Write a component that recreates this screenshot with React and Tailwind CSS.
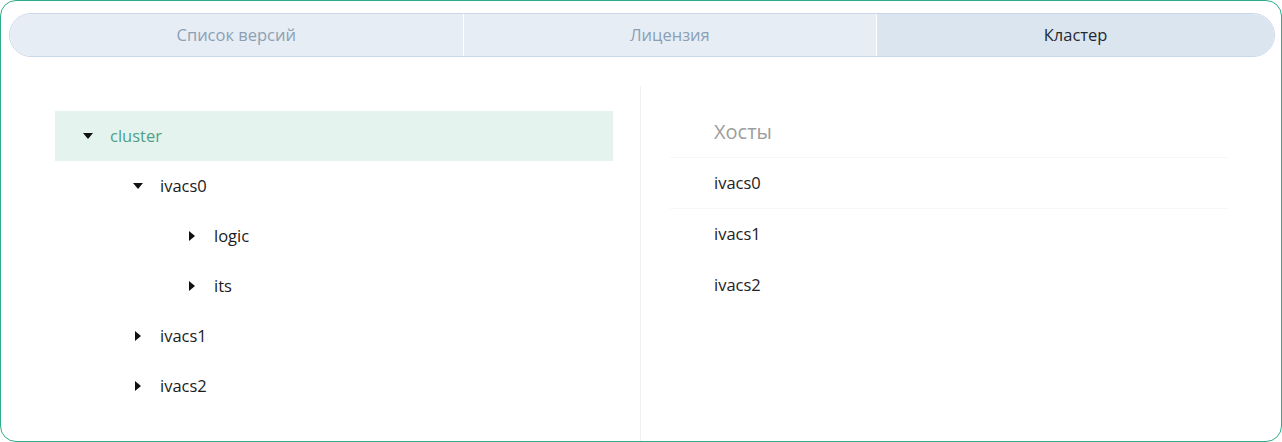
import React from 'react';

const tabs = [
  { label: 'Список версий', active: false },
  { label: 'Лицензия', active: false },
  { label: 'Кластер', active: true },
];

const tree = [
  { label: 'cluster', level: 0, open: true, selected: true },
  { label: 'ivacs0', level: 1, open: true },
  { label: 'logic', level: 2, open: false },
  { label: 'its', level: 2, open: false },
  { label: 'ivacs1', level: 1, open: false },
  { label: 'ivacs2', level: 1, open: false },
];

const levelPad = ['pl-[28px]', 'pl-[78px]', 'pl-[132px]'];

function Caret({ open }) {
  return (
    <span className="w-[10px] h-[10px] flex items-center justify-center shrink-0">
      {open ? (
        <svg width="10" height="6" viewBox="0 0 10 6">
          <path d="M0 0 L10 0 L5 6 Z" fill="#111" />
        </svg>
      ) : (
        <svg width="6" height="10" viewBox="0 0 6 10">
          <path d="M0 0 L6 5 L0 10 Z" fill="#111" />
        </svg>
      )}
    </span>
  );
}

export default function App() {
  return (
    <div className="w-[1282px] h-[442px] bg-white font-['Open_Sans',sans-serif] overflow-hidden">
      <div className="h-full border border-[#2eac8a] rounded-[16px] pt-[12px] pl-[8px] pr-[6px] flex flex-col">
        <div className="flex h-[44px] rounded-full border border-[#c9d8e8] overflow-hidden">
          {tabs.map((t, i) => (
            <div
              key={t.label}
              className={
                'flex-auto flex items-center justify-center px-4 text-[16.5px] ' +
                (i > 0 ? 'border-l border-white ' : '') +
                (t.active ? 'bg-[#dbe5f0] text-[#1e2a33]' : 'bg-[#e6edf5] text-[#8ba0b4]')
              }
            >
              {t.label}
            </div>
          ))}
        </div>

        <div className="flex flex-1 mt-[29px]">
          <div className="w-[632px] border-r border-[#f0f0f0] pt-[25px] pl-[46px] pr-[27px]">
            {tree.map((n) => (
              <div
                key={n.label}
                className={
                  'h-[50px] flex items-center text-[16.5px] ' +
                  levelPad[n.level] +
                  (n.selected ? ' bg-[#e4f3ee] text-[#4f9f88]' : ' text-[#1b1b1b]')
                }
              >
                <Caret open={n.open} />
                <span className="ml-[17px] pt-[1px]">{n.label}</span>
              </div>
            ))}
          </div>

          <div className="flex-1 pt-[21px] pl-[29px]">
            <div className="w-[558px]">
              <div className="h-[51px] flex items-center pl-[44px] text-[20px] text-[#9d9d9d] border-b border-[#f7f7f7]">
                Хосты
              </div>
              <div className="h-[51px] flex items-center pl-[44px] text-[16.5px] text-[#222] border-b border-[#f7f7f7]">
                ivacs0
              </div>
              <div className="h-[51px] flex items-center pl-[44px] text-[16.5px] text-[#222]">
                ivacs1
              </div>
              <div className="h-[50px] flex items-center pl-[44px] text-[16.5px] text-[#222]">
                ivacs2
              </div>
            </div>
          </div>
        </div>
      </div>
    </div>
  );
}
